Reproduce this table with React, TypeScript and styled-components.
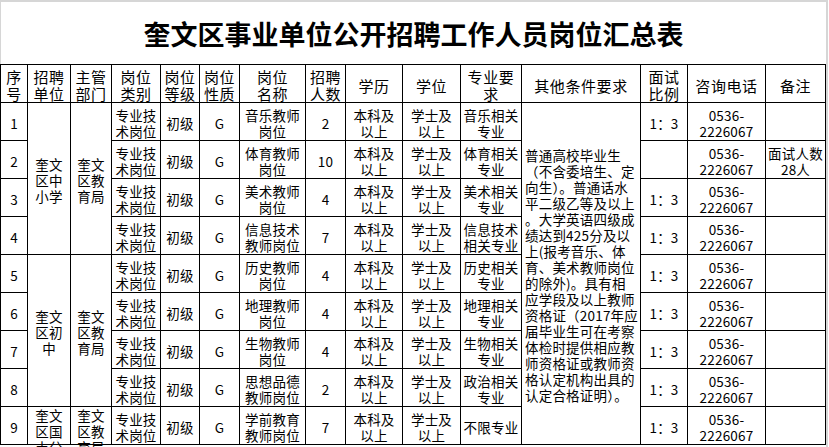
import React from "react";
import styled, { createGlobalStyle } from "styled-components";

const GlobalStyle = createGlobalStyle`
  html, body {
    margin: 0;
    padding: 0;
    background: #ffffff;
  }
  body {
    font-family: "Noto Sans CJK SC", "Noto Sans", sans-serif;
    color: #000;
  }
`;

const Page = styled.div`
  width: 829px;
  height: 447px;
  overflow: hidden;
  background: #fff;
`;

const Sheet = styled.div`
  width: 826px;
  border-right: 2px solid #d6d6d6;
  display: flex;
  flex-direction: column;
  height: 447px;
`;

const Title = styled.h1`
  margin: 0;
  height: 64px;
  box-sizing: border-box;
  border-top: 2px solid #d6d6d6;
  border-left: 1px solid #d6d6d6;
  display: flex;
  align-items: center;
  justify-content: center;
  padding-top: 2px;
  font-family: "Noto Sans CJK SC", sans-serif;
  font-weight: 700;
  font-size: 27px;
  line-height: 30px;
  letter-spacing: 0;
`;

const Grid = styled.div`
  display: grid;
  grid-template-columns: 26px 42px 40px 48px 38px 39px 65px 39px 56px 57px 60px 118px 46px 77px 59px;
  grid-template-rows: repeat(10, 37px);
  gap: 1px;
  padding: 1px;
  background: #000;
  width: 826px;
  box-sizing: border-box;
`;

const Cell = styled.div<{ $span?: number; $left?: boolean; $top?: boolean; $head?: boolean }>`
  background: #fff;
  grid-row: ${(p) => (p.$span ? `span ${p.$span}` : "auto")};
  display: flex;
  flex-direction: column;
  align-items: ${(p) => (p.$left ? "flex-start" : "center")};
  justify-content: ${(p) => (p.$top ? "flex-start" : "center")};
  text-align: ${(p) => (p.$left ? "left" : "center")};
  padding: ${(p) => (p.$top ? "0 1px 0 1px" : p.$left ? "2px 1px 0 3px" : "3px 1px 0 1px")};
  box-sizing: border-box;
  min-width: 0;
  font-size: ${(p) => (p.$head ? "15px" : "13.5px")};
  letter-spacing: ${(p) => (p.$head ? "0.6px" : "0.2px")};
  line-height: ${(p) => (p.$head ? "17px" : "16px")};
  white-space: nowrap;
  overflow: visible;
`;

const Line = styled.span`
  display: block;
  white-space: nowrap;
`;

const ml = (t: string) => t.split("|").map((s, i) => <Line key={i}>{s}</Line>);

const headers = [
  "序|号",
  "招聘|单位",
  "主管|部门",
  "岗位|类别",
  "岗位|等级",
  "岗位|性质",
  "岗位|名称",
  "招聘|人数",
  "学历",
  "学位",
  "专业要|求",
  "其他条件要求",
  "面试|比例",
  "咨询电话",
  "备注",
];

type Row = { name: string; count: string; major: string; ratio: string; note: string };

const rows: Row[] = [
  { name: "音乐教师|岗位", count: "2", major: "音乐相关|专业", ratio: "1：3", note: "" },
  { name: "体育教师|岗位", count: "10", major: "体育相关|专业", ratio: "", note: "面试人数|28人" },
  { name: "美术教师|岗位", count: "4", major: "美术相关|专业", ratio: "1：3", note: "" },
  { name: "信息技术|教师岗位", count: "7", major: "信息技术|相关专业", ratio: "1：3", note: "" },
  { name: "历史教师|岗位", count: "4", major: "历史相关|专业", ratio: "1：3", note: "" },
  { name: "地理教师|岗位", count: "4", major: "地理相关|专业", ratio: "1：3", note: "" },
  { name: "生物教师|岗位", count: "4", major: "生物相关|专业", ratio: "1：3", note: "" },
  { name: "思想品德|教师岗位", count: "2", major: "政治相关|专业", ratio: "1：3", note: "" },
  { name: "学前教育|教师岗位", count: "7", major: "不限专业", ratio: "1：3", note: "" },
];

const other =
  "普通高校毕业生|（不含委培生、定|向生）。普通话水|平二级乙等及以上|。大学英语四级成|绩达到425分及以|上(报考音乐、体|育、美术教师岗位|的除外)。具有相|应学段及以上教师|资格证（2017年应|届毕业生可在考察|体检时提供相应教|师资格证或教师资|格认定机构出具的|认定合格证明）。";

function renderRow(r: Row, i: number) {
  const cells: React.ReactNode[] = [];
  cells.push(<Cell key="no">{i + 1}</Cell>);
  if (i === 0) {
    cells.push(<Cell key="unit" $span={4}>{ml("奎文|区中|小学")}</Cell>);
    cells.push(<Cell key="dept" $span={4}>{ml("奎文|区教|育局")}</Cell>);
  } else if (i === 4) {
    cells.push(<Cell key="unit" $span={4}>{ml("奎文|区初|中")}</Cell>);
    cells.push(<Cell key="dept" $span={4}>{ml("奎文|区教|育局")}</Cell>);
  } else if (i === 8) {
    cells.push(<Cell key="unit" $top>{ml("奎文|区国|土分|局")}</Cell>);
    cells.push(<Cell key="dept" $top>{ml("奎文|区教|育局")}</Cell>);
  }
  cells.push(<Cell key="type">{ml("专业技|术岗位")}</Cell>);
  cells.push(<Cell key="lvl">初级</Cell>);
  cells.push(<Cell key="kind">G</Cell>);
  cells.push(<Cell key="name">{ml(r.name)}</Cell>);
  cells.push(<Cell key="cnt">{r.count}</Cell>);
  cells.push(<Cell key="edu">{ml("本科及|以上")}</Cell>);
  cells.push(<Cell key="deg">{ml("学士及|以上")}</Cell>);
  cells.push(<Cell key="major">{ml(r.major)}</Cell>);
  if (i === 0) {
    cells.push(
      <Cell key="other" $span={9} $left>
        {ml(other)}
      </Cell>
    );
  }
  cells.push(<Cell key="ratio">{r.ratio}</Cell>);
  cells.push(<Cell key="tel">{ml("0536-|2226067")}</Cell>);
  cells.push(<Cell key="note">{r.note ? ml(r.note) : null}</Cell>);
  return <React.Fragment key={i}>{cells}</React.Fragment>;
}

export default function App() {
  return (
    <Page>
      <GlobalStyle />
      <Sheet>
        <Title>奎文区事业单位公开招聘工作人员岗位汇总表</Title>
        <Grid>
          {headers.map((h) => (
            <Cell key={h} $head>
              {ml(h)}
            </Cell>
          ))}
          {rows.map(renderRow)}
        </Grid>
      </Sheet>
    </Page>
  );
}
